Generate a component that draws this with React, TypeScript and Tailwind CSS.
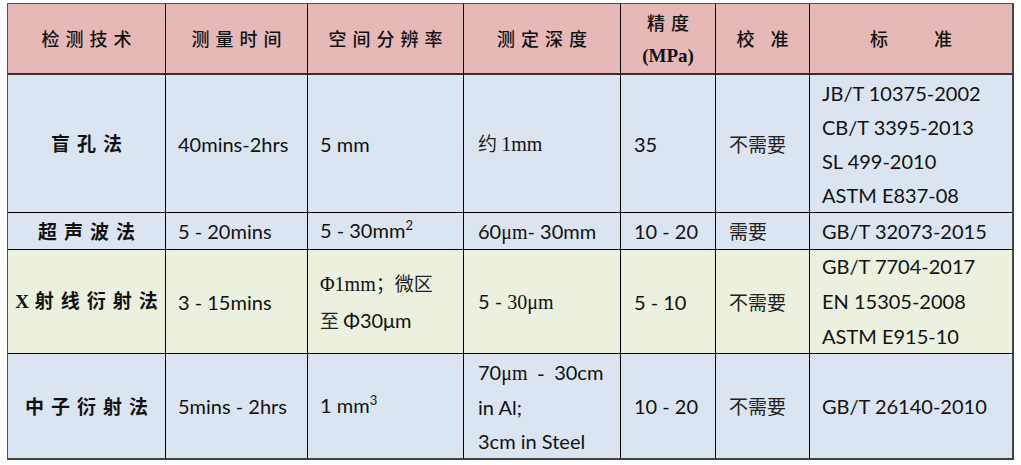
import React from "react";

function Sr({ children }: { children: React.ReactNode }) {
  return <span className="font-['Liberation_Serif','Noto_Sans_CJK_SC',serif]">{children}</span>;
}

export default function App() {
  const cell = "border-r border-b border-black flex flex-col justify-center";
  const last = "border-b border-black flex flex-col justify-center";
  const head = "border-r border-b-2 border-b-[#333] border-r-black flex flex-col items-center justify-center text-[18px] font-medium tracking-[6px] pl-[6px] text-[#111] font-['Noto_Sans_CJK_SC',sans-serif] whitespace-nowrap";
  const headLast = "border-b-2 border-b-[#333] flex flex-col items-center justify-center text-[18px] font-medium tracking-[6px] pl-[6px] text-[#111] font-['Noto_Sans_CJK_SC',sans-serif] whitespace-pre";
  const first = "border-r border-b border-black flex items-center justify-center text-[19px] font-bold tracking-[7px] pl-[7px] text-[#111] font-['Noto_Sans_CJK_SC',sans-serif] whitespace-nowrap";
  const body = "pl-[12px] text-[20px] leading-[34px] text-[#111] font-['Lato','Noto_Sans_CJK_SC',sans-serif] whitespace-nowrap";
  const cjk = "text-[19px] font-['Noto_Sans_CJK_SC',sans-serif] text-[#222]";
  const sup = "text-[13px] relative -top-[8px] align-baseline";

  return (
    <div className="w-[1021px] h-[465px] bg-white pt-[3px] pl-[7px]">
      <div className="w-[1007px] border-t border-l border-t-[#555] border-l-[#555] border-r-2 border-b-2 border-r-[#444] border-b-[#444] grid grid-cols-[158px_142px_156px_157px_95px_94px_202px] grid-rows-[71px_138px_37px_104px_104px]">
        {/* header */}
        <div className={`${head} bg-[#e6b9b8]`}>检测技术</div>
        <div className={`${head} bg-[#e6b9b8]`}>测量时间</div>
        <div className={`${head} bg-[#e6b9b8]`}>空间分辨率</div>
        <div className={`${head} bg-[#e6b9b8]`}>测定深度</div>
        <div className="border-r border-b-2 border-b-[#333] border-r-black flex flex-col items-center justify-center text-[#111] bg-[#e6b9b8] leading-[34px] whitespace-nowrap">
          <span className="text-[18px] font-medium tracking-[6px] pl-[6px] font-['Noto_Sans_CJK_SC',sans-serif]">精度</span>
          <span className="inline-flex font-['Liberation_Serif','DejaVu_Serif',serif] font-bold text-[19px] tracking-normal">
            <span>(MPa</span>
            <span>)</span>
          </span>
        </div>
        <div className={`${head} bg-[#e6b9b8]`}>校 准</div>
        <div className={`${headLast} bg-[#e6b9b8]`}>标    准</div>

        {/* row 1 */}
        <div className={`${first} bg-[#dbe5f1]`}>盲孔法</div>
        <div className={`${cell} ${body} bg-[#dbe5f1]`}>40mins-2hrs</div>
        <div className={`${cell} ${body} bg-[#dbe5f1]`}>5 mm</div>
        <div className={`${cell} ${body} pl-[14px] bg-[#dbe5f1]`}>
          <span>
            <span className={cjk}>约 </span>
            <Sr>1mm</Sr>
          </span>
        </div>
        <div className={`${cell} ${body} pl-[13px] bg-[#dbe5f1]`}>35</div>
        <div className={`${cell} ${body} pl-[13px] bg-[#dbe5f1]`}>
          <span className={cjk}>不需要</span>
        </div>
        <div className={`${last} ${body} bg-[#dbe5f1] leading-[33.5px]`}>
          <span>JB/T 10375-2002</span>
          <span>CB/T 3395-2013</span>
          <span>SL 499-2010</span>
          <span>ASTM E837-08</span>
        </div>

        {/* row 2 */}
        <div className={`${first} bg-[#dbe5f1]`}>超声波法</div>
        <div className={`${cell} ${body} bg-[#dbe5f1]`}>5 - 20mins</div>
        <div className={`${cell} ${body} bg-[#dbe5f1]`}>
          <span>
            5 - 30mm<span className={sup}>2</span>
          </span>
        </div>
        <div className={`${cell} ${body} pl-[14px] bg-[#dbe5f1]`}>
          <span>
            60<Sr>μm</Sr>- 30mm
          </span>
        </div>
        <div className={`${cell} ${body} pl-[13px] bg-[#dbe5f1]`}>10 - 20</div>
        <div className={`${cell} ${body} pl-[13px] bg-[#dbe5f1]`}>
          <span className={cjk}>需要</span>
        </div>
        <div className={`${last} ${body} bg-[#dbe5f1]`}>GB/T 32073-2015</div>

        {/* row 3 */}
        <div className={`${first} bg-[#ebf1de]`}>
          <span>
            <span className="font-['Liberation_Serif',serif] font-bold tracking-normal mr-[6px]">X</span>射线衍射法
          </span>
        </div>
        <div className={`${cell} ${body} bg-[#ebf1de]`}>3 - 15mins</div>
        <div className={`${cell} ${body} bg-[#ebf1de] leading-[35px]`}>
          <span>
            <Sr>Φ1mm</Sr>
            <span className={cjk}>；微区</span>
          </span>
          <span>
            <span className={cjk}>至 </span>Φ30μm
          </span>
        </div>
        <div className={`${cell} ${body} pl-[14px] bg-[#ebf1de]`}>
          <span>
            5 - <Sr>30μm</Sr>
          </span>
        </div>
        <div className={`${cell} ${body} pl-[13px] bg-[#ebf1de]`}>5 - 10</div>
        <div className={`${cell} ${body} pl-[13px] bg-[#ebf1de]`}>
          <span className={cjk}>不需要</span>
        </div>
        <div className={`${last} ${body} bg-[#ebf1de] leading-[35px]`}>
          <span>GB/T 7704-2017</span>
          <span>EN 15305-2008</span>
          <span>ASTM E915-10</span>
        </div>

        {/* row 4 */}
        <div className="border-r border-black flex items-center justify-center text-[19px] font-bold tracking-[7px] pl-[7px] text-[#111] font-['Noto_Sans_CJK_SC',sans-serif] bg-[#dbe5f1] whitespace-nowrap">
          中子衍射法
        </div>
        <div className={`border-r border-black flex flex-col justify-center ${body} bg-[#dbe5f1]`}>5mins - 2hrs</div>
        <div className={`border-r border-black flex flex-col justify-center ${body} bg-[#dbe5f1]`}>
          <span>
            1 mm<span className={sup}>3</span>
          </span>
        </div>
        <div className={`border-r border-black flex flex-col justify-center ${body} pl-[14px] bg-[#dbe5f1] whitespace-pre`}>
          <span>
            70<Sr>μm  -  </Sr>30cm
          </span>
          <span>in Al;</span>
          <span>3cm in Steel</span>
        </div>
        <div className={`border-r border-black flex flex-col justify-center ${body} pl-[13px] bg-[#dbe5f1]`}>10 - 20</div>
        <div className={`border-r border-black flex flex-col justify-center ${body} pl-[13px] bg-[#dbe5f1]`}>
          <span className={cjk}>不需要</span>
        </div>
        <div className={`flex flex-col justify-center ${body} bg-[#dbe5f1]`}>GB/T 26140-2010</div>
      </div>
    </div>
  );
}
